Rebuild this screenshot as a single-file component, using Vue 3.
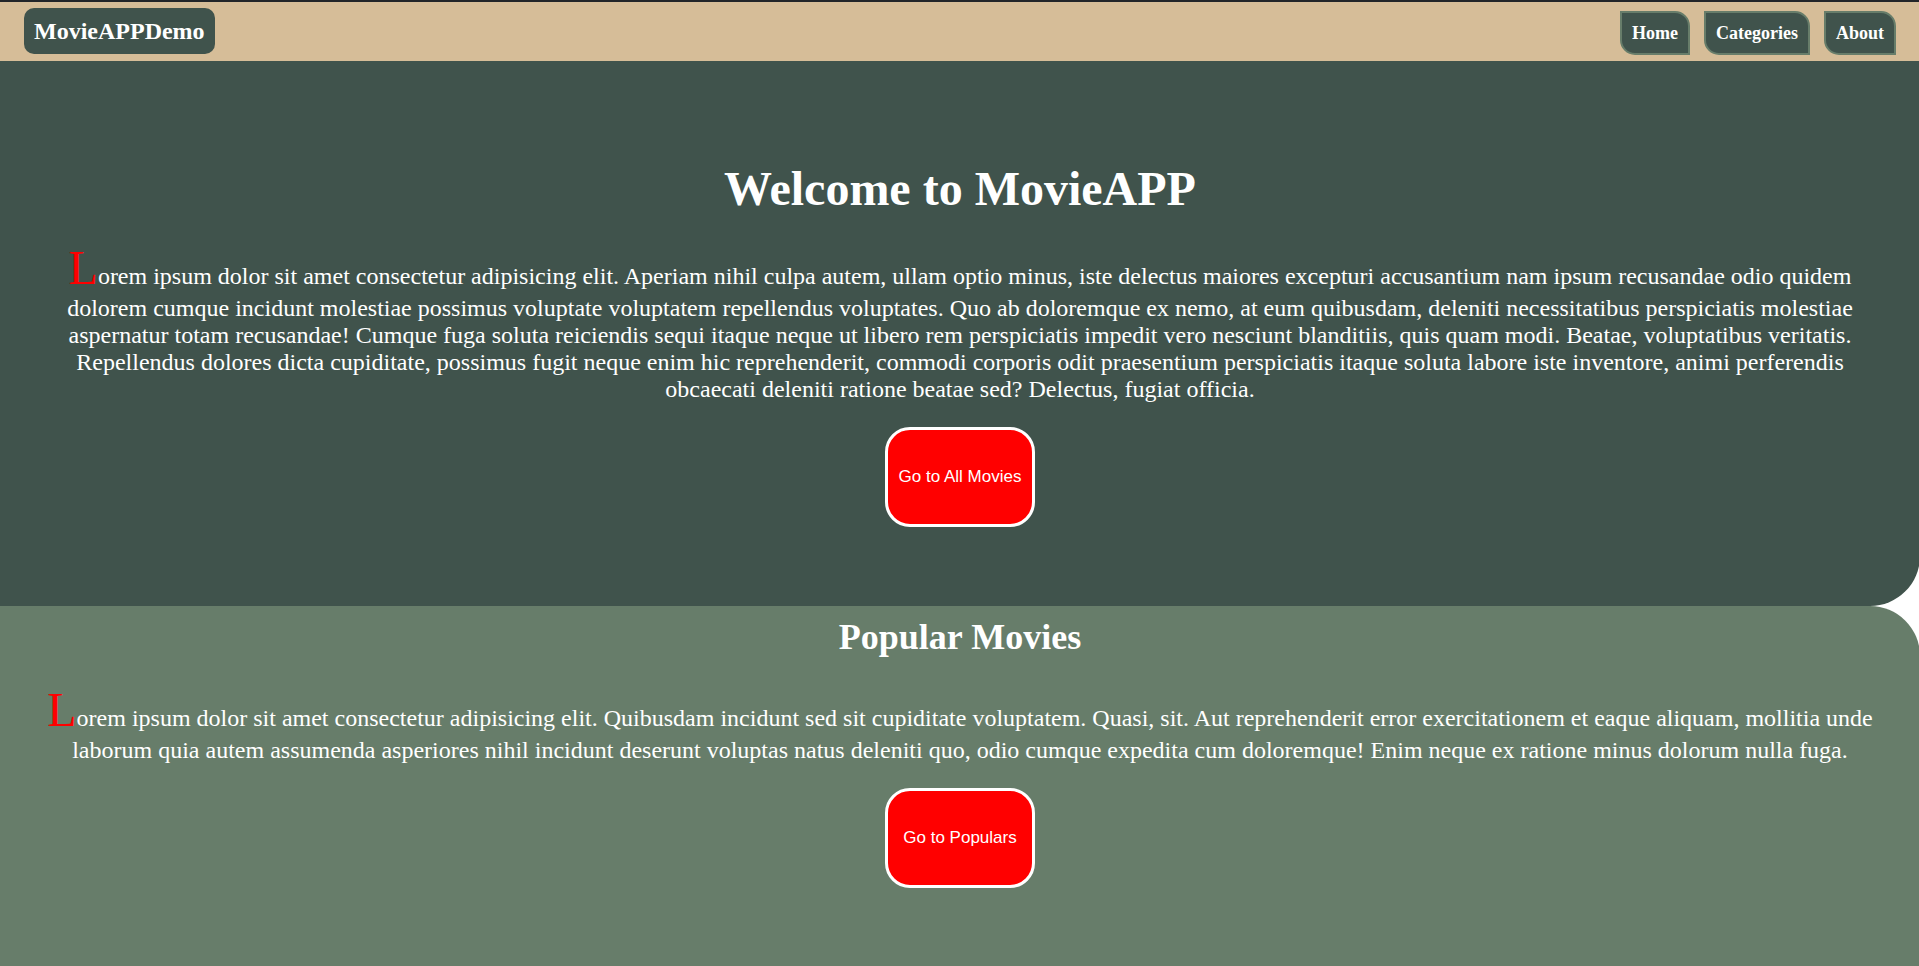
<script setup>
const links = ['Home', 'Categories', 'About']
const sections = [
  {
    id: 'welcome',
    level: 'h1',
    title: 'Welcome to MovieAPP',
    text: 'Lorem ipsum dolor sit amet consectetur adipisicing elit. Aperiam nihil culpa autem, ullam optio minus, iste delectus maiores excepturi accusantium nam ipsum recusandae odio quidem dolorem cumque incidunt molestiae possimus voluptate voluptatem repellendus voluptates. Quo ab doloremque ex nemo, at eum quibusdam, deleniti necessitatibus perspiciatis molestiae aspernatur totam recusandae! Cumque fuga soluta reiciendis sequi itaque neque ut libero rem perspiciatis impedit vero nesciunt blanditiis, quis quam modi. Beatae, voluptatibus veritatis. Repellendus dolores dicta cupiditate, possimus fugit neque enim hic reprehenderit, commodi corporis odit praesentium perspiciatis itaque soluta labore iste inventore, animi perferendis obcaecati deleniti ratione beatae sed? Delectus, fugiat officia.',
    action: 'Go to All Movies',
  },
  {
    id: 'popular',
    level: 'h2',
    title: 'Popular Movies',
    text: 'Lorem ipsum dolor sit amet consectetur adipisicing elit. Quibusdam incidunt sed sit cupiditate voluptatem. Quasi, sit. Aut reprehenderit error exercitationem et eaque aliquam, mollitia unde laborum quia autem assumenda asperiores nihil incidunt deserunt voluptas natus deleniti quo, odio cumque expedita cum doloremque! Enim neque ex ratione minus dolorum nulla fuga.',
    action: 'Go to Populars',
  },
]
</script>

<template>
  <div class="page">
    <header class="navbar">
      <a class="brand" href="#">MovieAPPDemo</a>
      <nav class="links">
        <a v-for="link in links" :key="link" class="link" href="#">{{ link }}</a>
      </nav>
    </header>
    <main class="content">
      <section v-for="s in sections" :key="s.id" class="section" :class="s.id">
        <component :is="s.level" class="title">{{ s.title }}</component>
        <p class="text">{{ s.text }}</p>
        <button type="button" class="action">{{ s.action }}</button>
      </section>
    </main>
  </div>
</template>

<style>
body {
  margin: 0;
  overflow-x: hidden;
  background: #fff;
}
</style>

<style scoped>
.page {
  display: flex;
  flex-direction: column;
  box-sizing: border-box;
  min-height: 100vh;
  margin-right: -1px;
  border-top: 2px solid #222529;
  color: #fff;
  font-family: "Liberation Serif", "Times New Roman", serif;
}
.navbar {
  display: flex;
  justify-content: space-between;
  align-items: flex-start;
  padding: 6px 24px;
  background: #d6bd98;
}
.brand {
  padding: 10px;
  border-radius: 10px;
  background: #40534c;
  color: #fff;
  font-size: 24px;
  font-weight: bold;
  line-height: 26px;
  text-decoration: none;
}
.links {
  display: flex;
  gap: 14px;
  padding-top: 3px;
}
.link {
  padding: 10px;
  border: 2px solid #677d6a;
  border-radius: 0 15px;
  background: #40534c;
  color: #fff;
  font-size: 18px;
  font-weight: bold;
  line-height: 20px;
  text-decoration: none;
}
.content {
  display: flex;
  flex: 1;
  flex-direction: column;
}
.section {
  display: flex;
  flex-direction: column;
  align-items: center;
  text-align: center;
}
.welcome {
  padding: 100px 50px 79px;
  border-bottom-right-radius: 50px;
  background: #40534c;
}
.popular {
  flex: 1;
  padding: 10px 40px 0;
  border-top-right-radius: 50px;
  background: #677d6a;
}
.title {
  margin: 0;
  font-size: 36px;
}
.welcome .title {
  font-size: 48px;
}
.text {
  margin: 24px 0;
  font-size: 24px;
}
.text::first-letter {
  color: red;
  font-size: 48px;
}
.action {
  width: 150px;
  height: 100px;
  padding: 0;
  border: 3px solid #fff;
  border-radius: 25px;
  background: red;
  color: #fff;
  font-family: "Liberation Sans", Arial, sans-serif;
  font-size: 17px;
  cursor: pointer;
}
</style>
